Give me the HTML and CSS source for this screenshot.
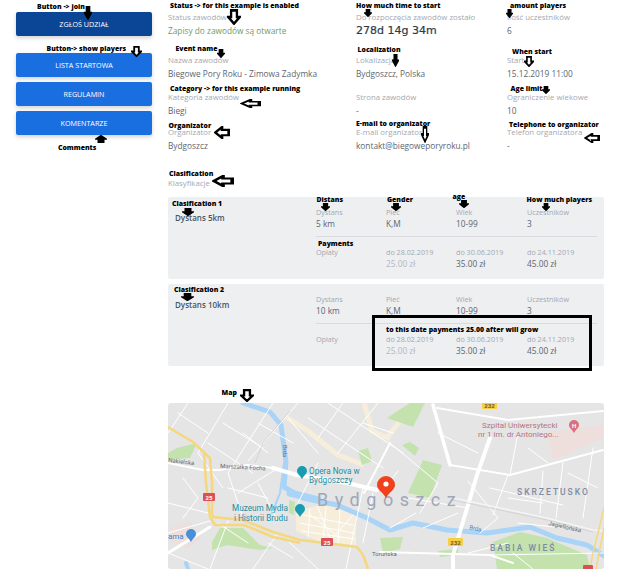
FILE: index.html
```html
<!DOCTYPE html>
<html lang="pl">

<head>
    <meta charset="UTF-8">
    <meta name="viewport" content="width=device-width, initial-scale=1.0">
    <title>Biegowe Pory Roku - Zimowa Zadymka</title>

    <link rel="stylesheet" href="styles.css">

</head>

<body>
    <div id="page">
        <div id="sidebar">
            <a class="btn btn-dark" href="#">ZGŁOŚ UDZIAŁ</a>
            <a class="btn" href="#">LISTA STARTOWA</a>
            <a class="btn" href="#">REGULAMIN</a>
            <a class="btn" href="#">KOMENTARZE</a>
        </div>

        <div id="main">
            <div id="info">
                <div class="field">
                    <div class="label">Status zawodów</div>
                    <div class="value status">Zapisy do zawodów są otwarte</div>
                </div>
                <div class="field">
                    <div class="label">Do rozpoczęcia zawodów zostało</div>
                    <div class="value countdown">278d 14g 34m</div>
                </div>
                <div class="field">
                    <div class="label">Ilość uczestników</div>
                    <div class="value">6</div>
                </div>

                <div class="field">
                    <div class="label">Nazwa zawodów</div>
                    <div class="value">Biegowe Pory Roku - Zimowa Zadymka</div>
                </div>
                <div class="field">
                    <div class="label">Lokalizacja</div>
                    <div class="value">Bydgoszcz, Polska</div>
                </div>
                <div class="field">
                    <div class="label">Start</div>
                    <div class="value">15.12.2019 11:00</div>
                </div>

                <div class="field">
                    <div class="label">Kategoria zawodów</div>
                    <div class="value">Biegi</div>
                </div>
                <div class="field">
                    <div class="label">Strona zawodów</div>
                    <div class="value">-</div>
                </div>
                <div class="field">
                    <div class="label">Ograniczenie wiekowe</div>
                    <div class="value">10</div>
                </div>

                <div class="field">
                    <div class="label">Organizator</div>
                    <div class="value">Bydgoszcz</div>
                </div>
                <div class="field">
                    <div class="label">E-mail organizatora</div>
                    <div class="value">kontakt@biegoweporyroku.pl</div>
                </div>
                <div class="field">
                    <div class="label">Telefon organizatora</div>
                    <div class="value">-</div>
                </div>
            </div>

            <div class="label">Klasyfikacje</div>

            <div id="races">
                <div class="race">
                    <div class="race-name">Dystans 5km</div>
                    <div class="race-details">
                        <div class="race-row">
                            <div class="cell"><div class="label">Dystans</div><div class="value">5 km</div></div>
                            <div class="cell"><div class="label">Płeć</div><div class="value">K,M</div></div>
                            <div class="cell"><div class="label">Wiek</div><div class="value">10-99</div></div>
                            <div class="cell"><div class="label">Uczestników</div><div class="value">3</div></div>
                        </div>
                        <div class="race-row fees">
                            <div class="cell"><div class="label">Opłaty</div></div>
                            <div class="cell"><div class="label">do 28.02.2019</div><div class="value past">25.00 zł</div></div>
                            <div class="cell"><div class="label">do 30.06.2019</div><div class="value">35.00 zł</div></div>
                            <div class="cell"><div class="label">do 24.11.2019</div><div class="value">45.00 zł</div></div>
                        </div>
                    </div>
                </div>

                <div class="race">
                    <div class="race-name">Dystans 10km</div>
                    <div class="race-details">
                        <div class="race-row">
                            <div class="cell"><div class="label">Dystans</div><div class="value">10 km</div></div>
                            <div class="cell"><div class="label">Płeć</div><div class="value">K,M</div></div>
                            <div class="cell"><div class="label">Wiek</div><div class="value">10-99</div></div>
                            <div class="cell"><div class="label">Uczestników</div><div class="value">3</div></div>
                        </div>
                        <div class="race-row fees">
                            <div class="cell"><div class="label">Opłaty</div></div>
                            <div class="cell"><div class="label">do 28.02.2019</div><div class="value past">25.00 zł</div></div>
                            <div class="cell"><div class="label">do 30.06.2019</div><div class="value">35.00 zł</div></div>
                            <div class="cell"><div class="label">do 24.11.2019</div><div class="value">45.00 zł</div></div>
                        </div>
                    </div>
                </div>
            </div>

            <!-- Mapa -->
            <svg id="map" viewBox="0 0 436 166" width="436" height="166" xmlns="http://www.w3.org/2000/svg">
                <rect width="436" height="166" fill="#e5e5e5"/>

                <!-- centrum i szpital -->
                <path fill="#f6eeda" d="M128 108L160 100 188 112 188 142 150 138 128 128z"/>
                <path fill="none" stroke="#f6eeda" stroke-width="5" d="M118 14L140 28 170 52 196 62M196 0L204 28 222 36M232 18L218 36"/>
                <path fill="#eedfdd" d="M380 29L435 22 435 35 385 57z"/>
                <path fill="#ecdfdd" d="M2 124L22 118 32 136 18 146 4 138z"/>

                <!-- parki -->
                <g fill="#c3e2ae">
                    <path d="M9 45L29 40 22 55 0 57 0 50z"/>
                    <path d="M44 139L52 125 75 125 92 142 105 145 92 147 59 142 44 147z"/>
                    <path d="M219 15L242 0 257 0 245 24z"/>
                    <path d="M234 42L242 39 251 45 247 53z"/>
                    <path d="M255 57L274 62 262 95 240 90z"/>
                    <path d="M325 139L352 129 379 135 419 152 422 166 329 166z"/>
                    <path d="M121 97L127 99 126 112 121 110z"/>
                    <path d="M190 48L200 45 204 58 194 62z"/>
                    <path d="M212 135L235 134 232 146 215 150z"/>
                    <path d="M270 148L290 146 290 152 272 154z"/>
                </g>

                <!-- rzeka Brda -->
                <g fill="none" stroke="#a9d3f7" stroke-linecap="round" stroke-linejoin="round">
                    <path stroke-width="5" d="M75 0L102 9 113 22 118 59 116 84 135 95 169 102 199 115 222 127 245 120 279 127 319 130 362 124 389 135 419 142 436 153"/>
                    <path stroke-width="2" d="M116 60L112 90 104 110"/>
                    <path stroke-width="7" d="M122 90L150 97"/>
                    <path stroke-width="4" d="M18 160L20 166"/>
                </g>

                <!-- drogi -->
                <g fill="none" stroke="#ffffff" stroke-linecap="round" stroke-linejoin="round">
                    <g stroke-width="1">
                        <path d="M20 0L0 30M60 0L30 50 55 85M105 0L60 70 75 115M130 0L80 58M55 20L95 45M40 40L85 70M0 100L40 110M0 130L42 118M70 90L110 65M90 80L110 118M60 118L42 166M110 130L85 166M120 138L150 166M175 0L150 35M210 0L170 50M160 0L235 50M140 15L215 65M195 85L178 166M185 112L160 140M140 110L172 135M150 105L165 142M205 90L195 140M0 150L40 166"/>
                        <path d="M222 40L270 80 252 110M230 68L215 88M248 110L222 125M300 78L330 115 312 130M322 85L395 102M340 72L325 112M375 68L372 110M395 60L388 115M425 45L415 115M345 150L365 166M300 150L340 140M342 72L350 30M270 30L310 50M360 45L380 60"/>
                        <path d="M15 75L30 95 15 115M60 85L100 95M75 30L100 50M10 10L40 30M50 120L80 140M120 15L150 50M90 20L125 40M150 60L130 100M100 140L125 155M195 20L225 30M240 95L300 105M255 125L290 110M340 95L375 100M350 120L395 125M400 70L430 85"/>
                        <path d="M135 112L185 122M132 120L186 130M134 128L186 136M142 106L140 134M158 104L155 138M172 108L170 140"/>
                    </g>
                    <g stroke-width="2">
                        <path d="M0 60L35 67 52 67 79 62 105 65"/>
                        <path d="M212 149L322 152 345 160"/>
                        <path d="M322 152L436 150" stroke-width="1"/>
                        <path d="M269 5L340 17 435 8"/>
                        <path d="M282 62L342 72 435 47"/>
                        <path d="M222 40L196 90"/>
                    </g>
                    <path stroke-width="4" d="M105 65L129 72 179 80 209 87"/>
                    <path stroke-width="3" d="M0 150L42 124"/>
                    <path stroke-width="3.5" d="M265 2L282 62"/>
                    <path stroke-width="4" d="M322 35L309 72 285 152 285 166"/>
                    <path stroke-width="1.5" stroke="#f4f4f4" d="M285 95L379 115 425 127 436 128"/>
                </g>
                <path fill="none" stroke="#c8c8c8" stroke-width=".6" d="M285 97L379 117 425 129M122 8L95 40 87 60"/>

                <!-- obwodnica -->
                <g fill="none" stroke="#f6d77e" stroke-width="2.5" stroke-linejoin="round">
                    <path d="M0 24L25 39 42 55 44 79 44 109 45 114 75 117 105 129 132 137 189 144 195 152 200 166"/>
                    <path d="M36 50L38 80 42 114 47 122 76 122 105 134 132 140"/>
                    <path d="M422 166L425 150 430 130 436 105M428 166L432 145 436 125" stroke-width="1.5"/>
                </g>

                <!-- numery dróg -->
                <g class="shield-text">
                    <rect class="shield-red" x="35" y="90" width="12" height="8" rx="1"/><text x="41" y="96.5">25</text>
                    <rect class="shield-red" x="153" y="135" width="12" height="8" rx="1"/><text x="159" y="141.5">25</text>
                    <rect class="shield-red" x="415" y="162" width="10" height="6" rx="1"/>
                    <rect class="shield-yellow" x="280" y="135" width="15" height="8" rx="1"/><text class="dark" x="287.5" y="141.5">232</text>
                    <rect class="shield-yellow" x="314" y="-2" width="15" height="8" rx="1"/><text class="dark" x="321.5" y="5">232</text>
                </g>

                <!-- ulice -->
                <g class="street">
                    <text x="0" y="59" transform="rotate(7 0 59)">Nakielska</text>
                    <text x="52" y="65" transform="rotate(3 52 65)">Marszałka Focha</text>
                    <text x="115" y="42" transform="rotate(90 115 42)">Brda</text>
                    <text class="river" x="301" y="126" transform="rotate(13 301 126)">Brda</text>
                    <text x="380" y="122" transform="rotate(13 380 122)">Jagiellońska</text>
                    <text x="204" y="153">Toruńska</text>
                </g>

                <!-- miejsca -->
                <g class="poi">
                    <text x="141" y="71">Opera Nova w</text>
                    <text x="141" y="80">Bydgoszczy</text>
                    <text x="64" y="108">Muzeum Mydła</text>
                    <text x="66" y="118">i Historii Brudu</text>
                </g>
                <text class="poi-blue" x="0" y="136">ama</text>
                <g class="poi-red">
                    <text x="314" y="25">Szpital Uniwersytecki</text>
                    <text x="310" y="34">nr 1 im. dr Antoniego...</text>
                </g>

                <!-- znaczniki -->
                <path fill="#1a9bb0" d="M133 67a5 5 0 0 1 10 0c0 3-3 4-5 8-2-4-5-5-5-8z" transform="translate(-4 1)"/>
                <path fill="#1a9bb0" d="M127 106a5 5 0 0 1 10 0c0 3-3 4-5 8-2-4-5-5-5-8z"/>
                <path fill="#4a90d9" d="M18 131a5 5 0 0 1 10 0c0 3-3 4-5 8-2-4-5-5-5-8z"/>
                <path fill="#d9707e" d="M401 24a5 5 0 0 1 10 0c0 3-3 4-5 8-2-4-5-5-5-8z" transform="translate(0 -2)"/>
                <text class="marker-h" x="406" y="25">H</text>

                <g class="city">
                    <text x="149" y="103">Bydgoszcz</text>
                </g>
                <text class="district" x="349" y="92">SKRZETUSKO</text>
                <text class="district" x="322" y="148">BABIA WIEŚ</text>

                <path fill="#f1411c" d="M209 82a9 9 0 0 1 18 0c0 5-6 7-9 13-3-6-9-8-9-13z"/>
                <circle cx="218" cy="81" r="2.6" fill="#ffffff"/>
            </svg>
        </div>
    </div>

    <!-- Anotaciones encima de la captura -->
    <svg id="notes" width="640" height="585" viewBox="0 0 640 585" xmlns="http://www.w3.org/2000/svg">
        <defs>
            <symbol id="down" viewBox="0 0 24 24" preserveAspectRatio="none">
                <path d="M7 2h10v10h5L12 22 2 12h5z"/>
            </symbol>
            <symbol id="up" viewBox="0 0 24 24" preserveAspectRatio="none">
                <path d="M7 22h10V12h5L12 2 2 12h5z"/>
            </symbol>
            <symbol id="left" viewBox="0 0 24 24" preserveAspectRatio="none">
                <path d="M22 7v10H12v5L2 12l10-10v5z"/>
            </symbol>
        </defs>

        <rect class="note-box" x="373.5" y="316.5" width="217" height="53"/>

        <g class="note">
            <text x="37" y="9">Button -&gt; join</text>
            <text x="170" y="8">Status -&gt; for this example is enabled</text>
            <text x="356" y="8">How much time to start</text>
            <text x="510" y="8">amount players</text>
            <text x="46.5" y="51">Button-&gt; show players</text>
            <text x="175.5" y="51">Event name</text>
            <text x="357.5" y="52">Localization</text>
            <text x="512" y="54">When start</text>
            <text x="170" y="91">Category -&gt; for this example running</text>
            <text x="510.5" y="91">Age limit</text>
            <text x="168.5" y="128">Organizator</text>
            <text x="356" y="126">E-mail to organizator</text>
            <text x="509" y="127">Telephone to organizator</text>
            <text x="58" y="150">Comments</text>
            <text x="169" y="176">Clasification</text>
            <text x="172" y="205.5">Clasification 1</text>
            <text x="316.5" y="202">Distans</text>
            <text x="387" y="202">Gender</text>
            <text x="452.5" y="199">age</text>
            <text x="526.5" y="201.5">How much players</text>
            <text x="318" y="246">Payments</text>
            <text x="174" y="292">Clasification 2</text>
            <text x="386" y="332">to this date payments 25.00 after will grow</text>
            <text x="221.5" y="394.5">Map</text>
        </g>

        <g class="arrow-solid">
            <use href="#down" x="84" y="6" width="8" height="14"/>
            <use href="#down" x="364" y="9" width="8" height="8"/>
            <use href="#down" x="506" y="9" width="7" height="9"/>
            <use href="#down" x="217" y="49" width="8" height="9"/>
            <use href="#down" x="392" y="54" width="7" height="13"/>
            <use href="#down" x="542" y="86" width="8" height="8"/>
            <use href="#up" x="95" y="135" width="12" height="8"/>
            <use href="#down" x="182" y="208" width="12" height="8"/>
            <use href="#down" x="321" y="203" width="9" height="8"/>
            <use href="#down" x="391" y="203" width="10" height="8"/>
            <use href="#down" x="459" y="200" width="10" height="8"/>
            <use href="#down" x="542" y="203" width="8" height="8"/>
            <use href="#down" x="181" y="293" width="13" height="8"/>
        </g>
        <g class="arrow-line">
            <use href="#down" x="227" y="9" width="14" height="16"/>
            <use href="#down" x="131" y="46" width="11" height="11"/>
            <use href="#down" x="524" y="56" width="10" height="11"/>
            <use href="#left" x="240" y="99" width="21" height="9"/>
            <use href="#left" x="214" y="126" width="16" height="13"/>
            <use href="#down" x="421" y="126" width="8" height="17"/>
            <use href="#left" x="584" y="133" width="16" height="10"/>
            <use href="#left" x="212" y="175" width="22" height="12"/>
            <use href="#down" x="240" y="389" width="14" height="13"/>
        </g>
    </svg>
</body>

</html>
```

FILE: styles.css
```css
body {
    margin: 0;
    font-family: "Open Sans", sans-serif;
    color: #5c6570;
    background-color: white;
}

#page {
    display: flex;
    width: 640px;
    height: 585px;
    overflow: hidden;
}

/* --- Botones --- */
#sidebar {
    display: flex;
    flex-direction: column;
    gap: 5px;
    width: 136px;
    margin-left: 16px;
    padding-top: 12px;
}

.btn {
    display: block;
    height: 24px;
    line-height: 24px;
    text-align: center;
    font-size: 7.2px;
    color: white;
    text-decoration: none;
    background-color: #1a6fe0;
    border-radius: 2px;
    box-shadow: 0 2px 4px rgba(0, 0, 0, 0.18);
}

.btn-dark {
    margin-bottom: 12px;
    background-color: #0a4596;
}

/* --- Datos --- */
#main {
    width: 436px;
    margin-left: 16px;
    padding-top: 10px;
}

#info {
    display: grid;
    grid-template-columns: 188px 151px 97px;
    grid-template-rows: 43px 37px 35px 51px;
}

.label {
    height: 14px;
    line-height: 14px;
    font-size: 7.8px;
    color: #a4a9b0;
    white-space: nowrap;
}

.value {
    height: 14px;
    line-height: 14px;
    font-size: 8.3px;
    white-space: nowrap;
}

.status {
    color: #6f9a5c;
}

.countdown {
    font-family: "DejaVu Sans", sans-serif;
    font-size: 11px;
    color: #2f3a44;
    -webkit-text-stroke: 0.2px #2f3a44;
}

/* --- Clasificaciones --- */
#races {
    display: flex;
    flex-direction: column;
    gap: 4.5px;
    margin-top: 7px;
}

.race {
    display: flex;
    height: 82px;
    padding: 10px 7px 0;
    box-sizing: border-box;
    background-color: #eeeff1;
    border-radius: 2px;
}

.race-name {
    width: 141px;
    padding-top: 5px;
    font-size: 8px;
    font-weight: 600;
    color: #4b5560;
}

.race-details {
    flex: 1;
}

.race-row {
    display: grid;
    grid-template-columns: 70px 70px 71px 70px;
}

.race-row .label {
    height: 11px;
    line-height: 11px;
    font-size: 7.2px;
}

.race-row .value {
    height: 11px;
    line-height: 11px;
}

.fees {
    margin-top: 7px;
    padding-top: 10px;
    border-top: 1px solid #d9dbde;
}

.past {
    color: #b4b8be;
}

/* --- Mapa --- */
#map {
    display: block;
    margin-top: 37px;
    border-radius: 3px;
    font-family: "Roboto", sans-serif;
}

.shield-red {
    fill: #d9505a;
}

.shield-yellow {
    fill: #f7cf45;
}

.shield-text text {
    font-size: 6px;
    font-weight: 700;
    text-anchor: middle;
    fill: white;
}

.shield-text .dark {
    fill: #6b5a20;
}

.street text {
    font-size: 6px;
    fill: #666b70;
}

.street .river {
    fill: #4f86c6;
}

.poi text {
    font-size: 8.2px;
    fill: #1f8d9e;
}

.poi-blue {
    font-size: 8px;
    fill: #3f83c9;
}

.poi-red text {
    font-size: 8px;
    fill: #b8737d;
}

.marker-h {
    font-size: 6px;
    font-weight: 700;
    fill: white;
    text-anchor: middle;
}

.city text {
    font-size: 18px;
    letter-spacing: 6.5px;
    fill: #9fa7b8;
}

.district {
    font-size: 8.5px;
    font-weight: 500;
    letter-spacing: 2px;
    fill: #7e8aa3;
}

/* --- Anotaciones --- */
#notes {
    position: absolute;
    left: 0;
    top: 0;
    pointer-events: none;
}

.note text {
    font-family: "Open Sans", sans-serif;
    font-size: 6.9px;
    font-weight: 800;
    fill: black;
}

.note-box {
    fill: none;
    stroke: black;
    stroke-width: 3px;
}

.arrow-solid {
    fill: black;
    stroke: black;
    stroke-width: 4px;
}

.arrow-line {
    fill: white;
    stroke: black;
    stroke-width: 4px;
}
```
